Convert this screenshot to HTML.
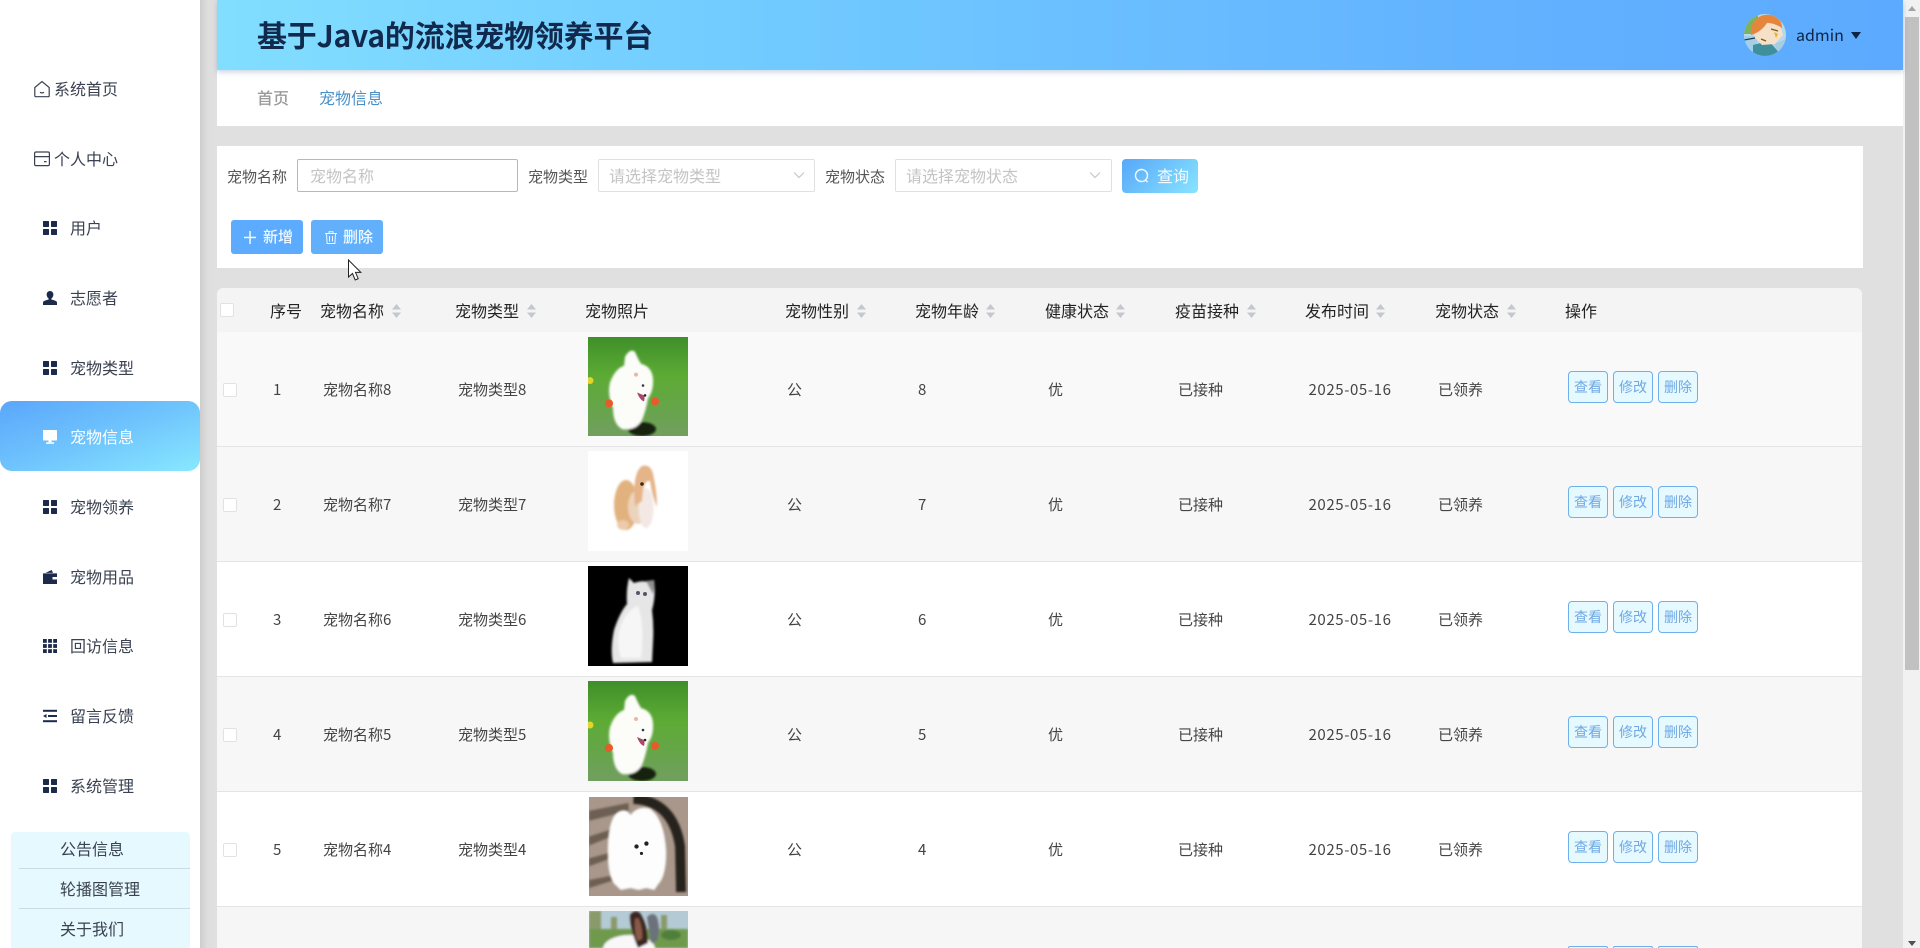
<!DOCTYPE html>
<html lang="zh"><head><meta charset="utf-8"><title>宠物信息</title>
<style>
*{box-sizing:border-box;margin:0;padding:0}
html,body{width:1920px;height:948px;overflow:hidden;background:#e0e0e0}
body{position:relative;font-family:"Noto Sans CJK SC","Liberation Sans",sans-serif;color:#333}
.a,.t,svg.i{position:absolute}
.t{white-space:nowrap;line-height:20px}
#side{position:absolute;left:0;top:0;width:200px;height:948px;background:#fff}
#strip{position:absolute;left:200px;top:0;width:17px;height:948px;background:linear-gradient(90deg,#cdcdcd,#dedede 45%,#e0e0e0)}
.m{font-size:16px;color:#3a4150;left:70px}
.sub{font-size:16px;color:#3a4150;left:60px}
.lab{font-size:15px;color:#555}
.ph{font-size:16px;color:#c4c4c4}
.box{position:absolute;background:#fff;border:1px solid #e0e0e0;height:34px;top:159px;border-radius:2px}
.b{position:absolute;border-radius:3px;color:#fff}
.h{font-size:16px;color:#222;top:300px}
.s{position:absolute;top:304px;width:9px;height:14px}
.r{position:absolute;left:217px;width:1645px;height:115px;border-bottom:1px solid #e4e4e4}
.r .t{font-size:15px;color:#444;top:48px;letter-spacing:0}
.g{background:#f7f7f7}.w{background:#fff}
.cb{position:absolute;left:6px;top:51px;width:14px;height:14px;background:#fff;border:1px solid #e2e2e2;border-radius:2px}
.n{left:56px}.c1{left:106px}.c2{left:241px}.c4{left:570px}.c5{left:701px}.c6{left:831px}.c7{left:961px}.c8{left:1091.5px;letter-spacing:.6px!important}.c9{left:1221px}
.btn{position:absolute;top:39px;width:40px;height:32px;background:#e6f9ff;border:1px solid #6eb0ea;border-radius:4px;color:#6fa8e4;font-size:14px;line-height:30px;text-align:center}
.b1{left:1351px}.b2{left:1396px}.b3{left:1441px}
.pic{position:absolute;left:371px;width:100px;height:100px;display:block}
</style></head><body>

<div id="side"></div>
<div id="strip"></div>

<!-- sidebar -->
<svg class="i" style="left:33px;top:80px" width="18" height="18" viewBox="0 0 18 18" fill="none" stroke="#3a4150" stroke-width="1.2"><path d="M1.8 7.5 9 1.5l7.2 6v8.2a1 1 0 0 1-1 1H2.800a1 1 0 0 1-1-1z"/><path d="M7 12.200c1.200.8 2.800.8 4 0"/></svg>
<div class="t" style="left:54px;top:78px;font-size:16px;color:#3a4150">系统首页</div>
<svg class="i" style="left:33px;top:150px" width="18" height="18" viewBox="0 0 18 18" fill="none" stroke="#3a4150" stroke-width="1.2"><rect x="1.600" y="2" width="14.800" height="13.600" rx="1.400"/><path d="M1.600 6.600h14.800M11 11.600h2.600"/></svg>
<div class="t" style="left:54px;top:148px;font-size:16px;color:#3a4150">个人中心</div>

<svg class="i" style="left:43px;top:221px" width="14" height="14" viewBox="0 0 14 14" fill="#1c2a4c"><rect width="6" height="6" rx=".6"/><rect x="8" width="6" height="6" rx=".6"/><rect y="8" width="6" height="6" rx=".6"/><rect x="8" y="8" width="6" height="6" rx=".6"/></svg>
<div class="t m" style="top:217px">用户</div>
<svg class="i" style="left:43px;top:291px" width="14" height="14" viewBox="0 0 14 14" fill="#1c2a4c"><path d="M7 0a3.400 3.400 0 0 1 3.400 3.500c0 1.700-1 3.300-2 4v1.100c2 .4 5.600 1.200 5.600 2.900V14H0v-2.500c0-1.700 3.600-2.500 5.600-2.900V7.500c-1-.7-2-2.300-2-4A3.400 3.400 0 0 1 7 0z"/></svg>
<div class="t m" style="top:287px">志愿者</div>
<svg class="i" style="left:43px;top:361px" width="14" height="14" viewBox="0 0 14 14" fill="#1c2a4c"><rect width="6" height="6" rx=".6"/><rect x="8" width="6" height="6" rx=".6"/><rect y="8" width="6" height="6" rx=".6"/><rect x="8" y="8" width="6" height="6" rx=".6"/></svg>
<div class="t m" style="top:357px">宠物类型</div>

<div class="a" style="left:0;top:401px;width:200px;height:70px;border-radius:12px;background:linear-gradient(160deg,#5aa6fb 0%,#6fc4fd 50%,#88e8fe 100%)"></div>
<svg class="i" style="left:43px;top:430px" width="14" height="14" viewBox="0 0 14 14" fill="#fff"><rect width="14" height="10.500" rx=".6"/><rect x="5.500" y="10.500" width="3" height="1.800"/><rect x="3" y="12.300" width="8" height="1.500"/></svg>
<div class="t m" style="top:426px;color:#fff">宠物信息</div>

<svg class="i" style="left:43px;top:500px" width="14" height="14" viewBox="0 0 14 14" fill="#1c2a4c"><rect width="6" height="6" rx=".6"/><rect x="8" width="6" height="6" rx=".6"/><rect y="8" width="6" height="6" rx=".6"/><rect x="8" y="8" width="6" height="6" rx=".6"/></svg>
<div class="t m" style="top:496px">宠物领养</div>
<svg class="i" style="left:43px;top:570px" width="14" height="14" viewBox="0 0 14 14" fill="#1c2a4c"><path d="M0 3.400h14V14H0zM2.500 2.900 8.600 0l1.400 2.900z"/><rect x="9.500" y="7" width="4.500" height="2.500" fill="#fff"/></svg>
<div class="t m" style="top:566px">宠物用品</div>
<svg class="i" style="left:43px;top:639px" width="14" height="14" viewBox="0 0 14 14" fill="#1c2a4c"><rect width="3.800" height="3.800"/><rect x="5.100" width="3.800" height="3.800"/><rect x="10.200" width="3.800" height="3.800"/><rect y="5.100" width="3.800" height="3.800"/><rect x="5.100" y="5.100" width="3.800" height="3.800"/><rect x="10.200" y="5.100" width="3.800" height="3.800"/><rect y="10.200" width="3.800" height="3.800"/><rect x="5.100" y="10.200" width="3.800" height="3.800"/><rect x="10.200" y="10.200" width="3.800" height="3.800"/></svg>
<div class="t m" style="top:635px">回访信息</div>
<svg class="i" style="left:43px;top:709px" width="14" height="14" viewBox="0 0 14 14" fill="#1c2a4c"><rect y=".8" width="14" height="2"/><rect x="5" y="6" width="9" height="2"/><path d="M0 7l3.500-2v4z"/><rect y="11.200" width="14" height="2"/></svg>
<div class="t m" style="top:705px">留言反馈</div>
<svg class="i" style="left:43px;top:779px" width="14" height="14" viewBox="0 0 14 14" fill="#1c2a4c"><rect width="6" height="6" rx=".6"/><rect x="8" width="6" height="6" rx=".6"/><rect y="8" width="6" height="6" rx=".6"/><rect x="8" y="8" width="6" height="6" rx=".6"/></svg>
<div class="t m" style="top:775px">系统管理</div>

<div class="a" style="left:11px;top:832px;width:179px;height:116px;background:#e6f9ff;border-radius:4px 4px 0 0"></div>
<div class="a" style="left:19px;top:868px;width:171px;height:1px;background:#cddbe4"></div>
<div class="a" style="left:19px;top:908px;width:171px;height:1px;background:#cddbe4"></div>
<div class="t sub" style="top:838px">公告信息</div>
<div class="t sub" style="top:878px">轮播图管理</div>
<div class="t sub" style="top:918px">关于我们</div>

<!-- header -->
<div class="a" style="left:217px;top:0;width:1686px;height:70px;background:linear-gradient(90deg,#82deff 0%,#72ccff 30%,#62b2ff 75%,#5caaff 100%);box-shadow:0 2px 5px rgba(90,130,170,.35);z-index:2"></div>
<div class="t" style="left:257px;top:14px;font-size:30px;line-height:40px;font-weight:700;letter-spacing:-.2px;color:#10294c;z-index:3">基于Java的流浪宠物领养平台</div>
<svg class="i" style="left:1744px;top:14px;z-index:3" width="42" height="42" viewBox="0 0 42 42"><defs><clipPath id="av"><circle cx="21" cy="21" r="21"/></clipPath></defs><g clip-path="url(#av)"><rect width="42" height="42" fill="#b9d9ea"/><path d="M0 0h14v20H0z" fill="#7db35f"/><path d="M0 22h12l4 20H0z" fill="#a4cfe8"/><path d="M9 31l16-4 13 15H9z" fill="#3f8f9c"/><path d="M30 30l12-5v17H36z" fill="#a6cde2"/><path d="M9 13c4-9 20-12 27-3l3 11-8 9-13 1-7-7z" fill="#f7e0c8"/><path d="M7 21C5 7 16-1 27 1c8 2 11 7 11 13-5-3-9-5-15-5-4 6-9 10-16 12z" fill="#e6863d"/><path d="M27 15l7 2M17 25l5 2" stroke="#7a5a20" stroke-width="1.300"/><path d="M30 18l4 2-2 4z" fill="#e0b52a"/><path d="M0 26l11-2" stroke="#1c3a4c" stroke-width="1.200"/></g></svg>
<div class="t" style="left:1796px;top:24px;font-size:16px;color:#0d2444;z-index:3">admin</div>
<svg class="i" style="left:1851px;top:32px;z-index:3" width="10" height="7" viewBox="0 0 10 7"><path d="M0 0h10L5 7z" fill="#0d2444"/></svg>

<!-- breadcrumb -->
<div class="a" style="left:217px;top:70px;width:1686px;height:56px;background:#fff"></div>
<div class="t" style="left:257px;top:87px;font-size:16px;color:#9a9a9a;font-weight:500">首页</div>
<div class="t" style="left:319px;top:87px;font-size:16px;color:#4a90c8">宠物信息</div>

<!-- search -->
<div class="a" style="left:217px;top:146px;width:1646px;height:122px;background:#fff"></div>
<div class="t lab" style="left:227px;top:167px">宠物名称</div>
<div class="box" style="left:297px;width:221px;border-color:#b8b8b8;height:33px"></div>
<div class="t ph" style="left:310px;top:165px">宠物名称</div>
<div class="t lab" style="left:528px;top:167px">宠物类型</div>
<div class="box" style="left:598px;width:217px;height:33px"></div>
<div class="t ph" style="left:609px;top:165px">请选择宠物类型</div>
<svg class="i" style="left:792px;top:171px" width="14" height="9" viewBox="0 0 14 9" fill="none" stroke="#c8c8c8" stroke-width="1.200"><path d="M2 1.500l5 5 5-5"/></svg>
<div class="t lab" style="left:825px;top:167px">宠物状态</div>
<div class="box" style="left:895px;width:217px;height:33px"></div>
<div class="t ph" style="left:906px;top:165px">请选择宠物状态</div>
<svg class="i" style="left:1088px;top:171px" width="14" height="9" viewBox="0 0 14 9" fill="none" stroke="#c8c8c8" stroke-width="1.200"><path d="M2 1.500l5 5 5-5"/></svg>
<div class="b" style="left:1122px;top:159px;width:76px;height:34px;border-radius:4px;background:linear-gradient(135deg,#57a7f9,#88e4fe)"></div>
<svg class="i" style="left:1134px;top:168px" width="16" height="16" viewBox="0 0 16 16" fill="none" stroke="#f4fbff" stroke-width="1.400"><circle cx="7.500" cy="7.500" r="6"/><path d="M11.500 12l2 2.200"/></svg>
<div class="t" style="left:1157px;top:165px;font-size:16px;color:#f2fbff">查询</div>

<div class="b" style="left:231px;top:220px;width:72px;height:34px;background:#5dabff"></div>
<svg class="i" style="left:244px;top:231px" width="12" height="13" viewBox="0 0 12 13" fill="#f2f9ff"><rect x="5.300" width="1.500" height="13"/><rect y="5.700" width="12" height="1.500"/></svg>
<div class="t" style="left:263px;top:227px;font-size:15px;color:#f2f9ff;font-weight:500">新增</div>
<div class="b" style="left:311px;top:220px;width:72px;height:34px;background:#62b0fc"></div>
<svg class="i" style="left:325px;top:231px" width="12" height="13" viewBox="0 0 12 13" fill="none" stroke="#f2f9ff" stroke-width="1"><path d="M0 2.500h12M4 2.500V.8h4v1.700M1.500 2.500l.6 10h7.800l.6-10M4.500 5v5.500M7.500 5v5.500"/></svg>
<div class="t" style="left:343px;top:227px;font-size:15px;color:#f2f9ff;font-weight:500">删除</div>

<!-- table head -->
<div class="a" style="left:217px;top:288px;width:1645px;height:44px;background:#f4f4f5;border-radius:6px 6px 0 0"></div>
<div class="a" style="left:220px;top:303px;width:14px;height:14px;background:#fff;border:1px solid #e2e2e2;border-radius:2px"></div>
<div class="t h" style="left:270px">序号</div>
<div class="t h" style="left:320px">宠物名称</div>
<div class="t h" style="left:455px">宠物类型</div>
<div class="t h" style="left:585px">宠物照片</div>
<div class="t h" style="left:785px">宠物性别</div>
<div class="t h" style="left:915px">宠物年龄</div>
<div class="t h" style="left:1045px">健康状态</div>
<div class="t h" style="left:1175px">疫苗接种</div>
<div class="t h" style="left:1305px">发布时间</div>
<div class="t h" style="left:1435px">宠物状态</div>
<div class="t h" style="left:1565px">操作</div>
<svg width="0" height="0" style="position:absolute"><defs>
<symbol id="srt" viewBox="0 0 9 14"><path d="M4.500 0 9 5.500H0zM4.500 14 0 8.500h9z" fill="#c4c7cc"/></symbol>
<filter id="bl" x="-10%" y="-10%" width="120%" height="120%"><feGaussianBlur stdDeviation="1"/></filter>
<linearGradient id="gr" x1="0" y1="0" x2="0" y2="1"><stop offset="0" stop-color="#3f8f2a"/><stop offset=".4" stop-color="#5dab35"/><stop offset=".7" stop-color="#66a548"/><stop offset="1" stop-color="#729f60"/></linearGradient>
<clipPath id="cp"><rect width="100" height="100"/></clipPath>
<symbol id="dog" viewBox="0 0 100 100"><g clip-path="url(#cp)">
<rect width="100" height="100" fill="url(#gr)"/>
<g filter="url(#bl)"><ellipse cx="54" cy="93" rx="14" ry="7" fill="#15240f"/>
<path d="M37 20Q42 11 47 15 50 22 53 27 64 30 65 42 66 54 60 62 58 74 54 84 48 95 34 93 25 88 25 72 19 58 22 46 27 32 36 29Z" fill="#fcfcf8"/></g>
<circle cx="2" cy="44" r="3.500" fill="#e2d62a"/><circle cx="21" cy="67" r="4" fill="#e85a2a"/><circle cx="67" cy="65" r="4" fill="#e85a2a"/>
<circle cx="48" cy="38" r="2" fill="#e9b8a8"/><circle cx="55" cy="49" r="1.300" fill="#334"/><circle cx="57" cy="59" r="1.300" fill="#222"/><path d="M49 56q3 8 7 9 1-3 0-6z" fill="#a8486a"/>
</g></symbol>
</defs></svg>
<svg class="s" style="left:392px"><use href="#srt"/></svg>
<svg class="s" style="left:527px"><use href="#srt"/></svg>
<svg class="s" style="left:857px"><use href="#srt"/></svg>
<svg class="s" style="left:986px"><use href="#srt"/></svg>
<svg class="s" style="left:1116px"><use href="#srt"/></svg>
<svg class="s" style="left:1247px"><use href="#srt"/></svg>
<svg class="s" style="left:1376px"><use href="#srt"/></svg>
<svg class="s" style="left:1507px"><use href="#srt"/></svg>

<!-- rows -->
<div class="r g" style="top:332px;background:#f9f9f9"><div class="cb"></div><div class="t n">1</div><div class="t c1">宠物名称8</div><div class="t c2">宠物类型8</div>
<svg class="pic" style="top:5px;height:99px" viewBox="0 0 100 100" preserveAspectRatio="none"><use href="#dog"/></svg>
<div class="t c4">公</div><div class="t c5">8</div><div class="t c6">优</div><div class="t c7">已接种</div><div class="t c8">2025-05-16</div><div class="t c9">已领养</div>
<div class="btn b1">查看</div><div class="btn b2">修改</div><div class="btn b3">删除</div></div>

<div class="r g" style="top:447px"><div class="cb"></div><div class="t n">2</div><div class="t c1">宠物名称7</div><div class="t c2">宠物类型7</div>
<svg class="pic" style="top:4px" viewBox="0 0 100 100"><rect width="100" height="100" fill="#fff"/><g filter="url(#bl)"><ellipse cx="38" cy="54" rx="12" ry="25" fill="#e2b27e"/><ellipse cx="35" cy="74" rx="6" ry="5" fill="#eccbaa"/><ellipse cx="50" cy="56" rx="10" ry="17" fill="#ecd3bb"/><ellipse cx="58" cy="57" rx="7.500" ry="20" fill="#f3e8e4"/><path d="M47 55Q44 22 54 15 64 12 66 28 69 42 69 56 64 45 62 30 55 28 54 50Z" fill="#e5b488"/></g><circle cx="54" cy="33" r="1.800" fill="#3a2a1a"/></svg>
<div class="t c4">公</div><div class="t c5">7</div><div class="t c6">优</div><div class="t c7">已接种</div><div class="t c8">2025-05-16</div><div class="t c9">已领养</div>
<div class="btn b1">查看</div><div class="btn b2">修改</div><div class="btn b3">删除</div></div>

<div class="r w" style="top:562px"><div class="cb"></div><div class="t n">3</div><div class="t c1">宠物名称6</div><div class="t c2">宠物类型6</div>
<svg class="pic" style="top:4px" viewBox="0 0 100 100"><rect width="100" height="100" fill="#000"/><g filter="url(#bl)"><path d="M41 12 46 17Q54 14 60 16L66 14Q68 30 64 44 66 60 65 76L64 96 25 97Q22 84 26 64 32 46 39 38 38 24 41 12Z" fill="#e6e6e6"/><path d="M32 62Q37 45 50 40 57 60 53 92L33 92Q28 76 32 62Z" fill="#f6f6f6"/><path d="M58 15l8-1q1 8-1 14z" fill="#8e8e8e"/></g><circle cx="50" cy="27" r="2" fill="#556"/><circle cx="57" cy="28" r="2" fill="#556"/></svg>
<div class="t c4">公</div><div class="t c5">6</div><div class="t c6">优</div><div class="t c7">已接种</div><div class="t c8">2025-05-16</div><div class="t c9">已领养</div>
<div class="btn b1">查看</div><div class="btn b2">修改</div><div class="btn b3">删除</div></div>

<div class="r g" style="top:677px"><div class="cb"></div><div class="t n">4</div><div class="t c1">宠物名称5</div><div class="t c2">宠物类型5</div>
<svg class="pic" style="top:4px" viewBox="0 0 100 100"><use href="#dog"/></svg>
<div class="t c4">公</div><div class="t c5">5</div><div class="t c6">优</div><div class="t c7">已接种</div><div class="t c8">2025-05-16</div><div class="t c9">已领养</div>
<div class="btn b1">查看</div><div class="btn b2">修改</div><div class="btn b3">删除</div></div>

<div class="r w" style="top:792px"><div class="cb"></div><div class="t n">5</div><div class="t c1">宠物名称4</div><div class="t c2">宠物类型4</div>
<svg class="pic" style="top:5px;width:99px;height:99px;left:372px" viewBox="0 0 100 100"><rect width="100" height="100" fill="#a8978a"/><g filter="url(#bl)"><path d="M0 14 40 6v8L0 24zM0 40l25-8v7L0 49zM0 62l22-6v6L0 70zM0 84l25-5v5L0 92z" fill="#6d5f52"/><path d="M45 2Q85 4 92 50L93 96" fill="none" stroke="#28211c" stroke-width="10"/></g><g filter="url(#bl)"><path d="M19 55Q19 18 32 14 38 12 42 18 50 8 62 12 76 22 78 55 78 80 70 88L66 94 58 92 50 94 42 92 32 94 28 90Q19 84 19 55Z" fill="#fdfdfd"/></g><circle cx="48" cy="50" r="2.200" fill="#222"/><circle cx="58" cy="47" r="2.200" fill="#222"/><circle cx="53" cy="57" r="1.600" fill="#222"/></svg>
<div class="t c4">公</div><div class="t c5">4</div><div class="t c6">优</div><div class="t c7">已接种</div><div class="t c8">2025-05-16</div><div class="t c9">已领养</div>
<div class="btn b1">查看</div><div class="btn b2">修改</div><div class="btn b3">删除</div></div>

<div class="a" style="left:217px;top:907px;width:1645px;height:41px;background:#f6f6f6"></div>
<svg class="i" style="left:589px;top:911px" width="99" height="37" viewBox="0 0 99 37"><rect width="99" height="37" fill="#b4cbd6"/><g filter="url(#bl)"><path d="M0 0h12v18H0zM22 6h6v12h-6zM72 4h6v14h-6z" fill="#8a9a6a"/><path d="M0 18h99v19H0z" fill="#6f9a4c"/><ellipse cx="82" cy="24" rx="10" ry="5" fill="#4f7f3a"/><ellipse cx="40" cy="38" rx="26" ry="14" fill="#f8f8f8"/><path d="M41 4q5-6 10-2 8 12 8 30l-10 5q-8-18-8-33z" fill="#3a2620"/><path d="M46 8q2-2 4 0 4 10 3 20l-5 2q-3-10-2-22z" fill="#8a5a48"/><path d="M58 6q6-6 10 0 4 12 0 24l-6 2z" fill="#6c727c"/></g></svg>
<div class="btn" style="left:1568px;top:946px;height:2px;border-bottom:none;border-radius:4px 4px 0 0"></div>
<div class="btn" style="left:1613px;top:946px;height:2px;border-bottom:none;border-radius:4px 4px 0 0"></div>
<div class="btn" style="left:1658px;top:946px;height:2px;border-bottom:none;border-radius:4px 4px 0 0"></div>

<!-- cursor -->
<svg class="i" style="left:347px;top:259px;z-index:5" width="15" height="23" viewBox="0 0 15 23"><path d="M1.500 1v17l4-3.500 2.700 6.500 3-1.300-2.700-6.300h5.300z" fill="#fff" stroke="#222" stroke-width="1"/></svg>

<!-- scrollbar -->
<div class="a" style="left:1903px;top:0;width:17px;height:948px;background:#f1f1f1"></div>
<div class="a" style="left:1905px;top:17px;width:14px;height:653px;background:#c1c1c1"></div>
<svg class="i" style="left:1907px;top:5px" width="10" height="7" viewBox="0 0 10 7"><path d="M5 1l4 5H1z" fill="#a3a3a3"/></svg>
<svg class="i" style="left:1907px;top:940px" width="10" height="7" viewBox="0 0 10 7"><path d="M1 1h8L5 6z" fill="#505050"/></svg>
</body></html>
